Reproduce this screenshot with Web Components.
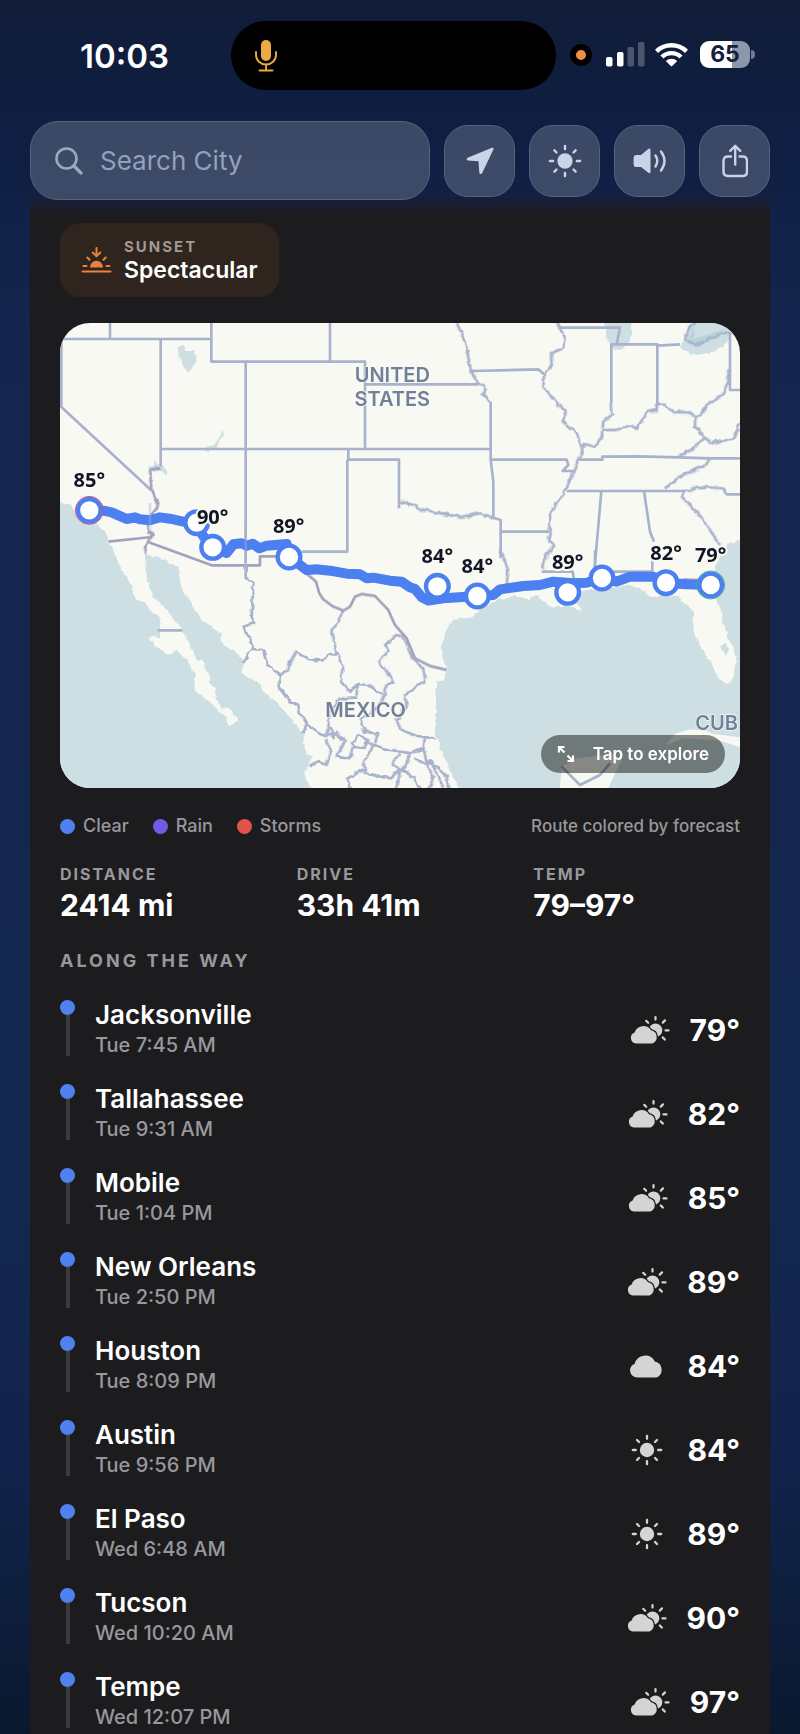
<!DOCTYPE html>
<html lang="en">
<head>
<meta charset="utf-8">
<meta name="viewport" content="width=device-width, initial-scale=1">
<title>Route forecast</title>
<style>
  body {
    margin: 0;
    min-height: 100vh;
    background: linear-gradient(#101c38 0, #0f1e42 130px, #14264e 340px, #14274f 1200px, #11234a 1470px, #0a182f 1734px);
    color: #fff;
    font-family: Inter, "Liberation Sans", sans-serif;
  }
</style>
</head>
<body>
<trip-screen></trip-screen>

<script>
const sunShape = `
  <circle cx="16" cy="16" r="7.2" fill="currentColor"/>
  <path d="M16 1.800v3M16 27.200v3M1.800 16h3M27.200 16h3M6 6l2 2M24 24l2 2M6 26l2-2M24 8l2-2"
    fill="none" stroke="currentColor" stroke-width="2.300" stroke-linecap="round"/>`

const icons = {
  search: `<svg viewBox="0 0 28 28" width="28" height="28"><g fill="none" stroke="currentColor" stroke-width="2.600" stroke-linecap="round"><circle cx="11.500" cy="11.500" r="10"/><path d="M19 19l7 7" stroke-width="3.200"/></g></svg>`,
  location: `<svg viewBox="0 0 28 28" width="28" height="28"><path d="M26 .8L1.600 10.800C.2 11.500.4 13.300 2 13.500L12.500 14.300 13.300 25.500C13.500 27.300 15.300 27.500 16.200 26L27.300 2.800C28 1.300 27.300.3 26 .8Z" fill="currentColor"/></svg>`,
  sun: `<svg viewBox="0 0 32 32" width="34" height="34">${sunShape}</svg>`,
  volume: `<svg viewBox="0 0 34 28" width="34" height="28"><path d="M3 8H8L15 2.200C16.500 1 17.500 1.800 17.500 3V24.500C17.500 26 16.500 26.800 15 25.500L8 20H3Q.6 20 .6 17.500V10.500Q.6 8 3 8Z" fill="currentColor"/><path d="M22.500 8.500Q26 14 22.500 19.500M28 4.500Q35 14 28 23.500" fill="none" stroke="currentColor" stroke-width="2.400" stroke-linecap="round"/></svg>`,
  share: `<svg viewBox="0 0 26 34" width="26" height="34"><path d="M9 12.500H6Q1.500 12.500 1.500 17V27.500Q1.500 32 6 32H20.500Q25 32 25 27.500V17Q25 12.500 20.500 12.500H17.500M13.200 20.500V2M8.200 6.800L13.200 1.800L18.200 6.800" fill="none" stroke="currentColor" stroke-width="2.400" stroke-linecap="round" stroke-linejoin="round"/></svg>`,
  sunset: `<svg viewBox="0 0 31 28" width="31" height="28"><path d="M9 21.500a6.500 6.800 0 0 1 13 0z" fill="currentColor"/><path d="M1.500 25.500H29.500M2.500 20h3M25.500 20h3M6.300 11.500l2.200 2.200M24.700 11.500l-2.200 2.200M15.500 2v8M11.700 6.500l3.800 3.800 3.800-3.800" fill="none" stroke="currentColor" stroke-width="2" stroke-linecap="round" stroke-linejoin="round"/></svg>`,
  mic: `<svg viewBox="0 0 22 32" width="22" height="32"><rect x="6" y="0" width="10" height="21" rx="5" fill="currentColor"/><path d="M1 12v3a10 9.500 0 0 0 20 0v-3M11 25v5M4.500 30.500h13" fill="none" stroke="currentColor" stroke-width="1.900" stroke-linecap="round"/></svg>`,
  wifi: `<svg viewBox="0 0 33 25" width="33" height="25"><g fill="none" stroke="currentColor" stroke-width="4.400"><path d="M1.500 9.300A21.500 21.500 0 0 1 31.500 9.300"/><path d="M7 15A13.500 13.500 0 0 1 26 15"/></g><path d="M10.800 19A8.500 8.500 0 0 1 22.200 19L17.200 24Q16.500 24.700 15.800 24Z" fill="currentColor"/></svg>`,
  signal: `<svg viewBox="0 0 39 25" width="39" height="25"><g fill="currentColor"><rect x="0" y="15" width="6.500" height="9.500" rx="1.800"/><rect x="11" y="10" width="6.500" height="14.500" rx="1.800"/><g opacity=".25"><rect x="21.500" y="5" width="6.500" height="19.500" rx="1.800"/><rect x="32" y="0" width="6.500" height="24.500" rx="1.800"/></g></g></svg>`,
  expand: `<svg viewBox="0 0 18 18" width="18" height="18"><path d="M2 7.500V2H7.500M2 2L7.500 7.500M16 10.500V16H10.500M16 16L10.500 10.500" fill="none" stroke="currentColor" stroke-width="2.200"/></svg>`,
  clear: `<svg viewBox="0 0 32 32" width="32" height="32">${sunShape}</svg>`,
  cloudy: `<svg viewBox="0 0 34 24" width="36" height="25"><path d="M7.500 22.500A6.800 6.800 0 0 1 5.200 9.300 10.400 10.400 0 0 1 24.500 7.200 8 8 0 0 1 26 22.500Z" fill="currentColor"/></svg>`,
  partly: `<svg viewBox="0 0 40 30" width="40" height="30"><g fill="none" stroke="currentColor" stroke-width="2.200" stroke-linecap="round"><path d="M25.500 2v2.600M35 5.400l-2.200 2.200M38.500 15.400h-3M34.800 24.600l-2-2.200M16.200 5.800l2 2"/></g><circle cx="25.500" cy="15.200" r="6.800" fill="currentColor"/><path d="M6 28.500A5.700 5.700 0 0 1 4.600 17.500 9.200 9.200 0 0 1 21 15.200 7 7 0 0 1 22.500 28.500Z" fill="currentColor" stroke="#1c1c1e" stroke-width="2.600" paint-order="stroke"/></svg>`
}

// Attaches an open shadow root holding the given markup
class BaseElement extends HTMLElement {
  render(html) {
    const template = document.createElement('template')
    template.innerHTML = html
    this.attachShadow({mode: 'open'})
    .appendChild(template.content.cloneNode(true))
  }
}

customElements.define('trip-icon',
class TripIcon extends BaseElement {
  connectedCallback() {
    this.render(`
<style>
  :host { display: inline-flex; justify-content: center; align-items: center; }
  svg { display: block; }
</style>
${icons[this.getAttribute('name')]}`)
  }
})

customElements.define('status-bar',
class StatusBar extends BaseElement {
  constructor() {
    super()
    this.render(`
<style>
  :host {
    display: grid;
    grid-template-columns: 1fr 325px 1fr;
    align-items: center;
    padding: 21px 13px 0 0;
  }
  .time {
    padding-left: 18px;
    text-align: center;
    font-size: 33px;
    line-height: 40px;
    font-weight: 600;
  }
  .island {
    display: flex;
    align-items: center;
    height: 69px;
    padding-left: 24px;
    border-radius: 35px;
    background: #000;
    color: #eeaa42;
    box-sizing: border-box;
  }
  .right { display: flex; align-items: center; padding: 0 0 2px 14px; }
  .recording {
    width: 10px;
    height: 10px;
    margin-right: 14px;
    border: 6px solid #000;
    border-radius: 50%;
    background: #ee9045;
  }
  .wifi { margin: 0 12px 0 10px; }
  .battery {
    width: 50px;
    border-radius: 9px;
    background: linear-gradient(90deg, #fff 64%, #8e97aa 64%);
    color: #14203d;
    text-align: center;
    font-size: 23px;
    line-height: 27px;
    font-weight: 700;
  }
  .nub { width: 4px; height: 9px; margin-left: 1px; border-radius: 0 4px 4px 0; background: #6f7a92; }
</style>
<div class="time">10:03</div>
<div class="island"><trip-icon name="mic"></trip-icon></div>
<div class="right">
  <div class="recording"></div>
  <trip-icon name="signal"></trip-icon>
  <trip-icon class="wifi" name="wifi"></trip-icon>
  <div class="battery">65</div>
  <div class="nub"></div>
</div>`)
  }
})

customElements.define('search-field',
class SearchField extends BaseElement {
  constructor() {
    super()
    this.render(`
<style>
  :host { display: block; min-width: 0; }
  label {
    display: flex;
    align-items: center;
    gap: 17px;
    height: 79px;
    padding: 0 24px;
    border: 1px solid #56637c;
    border-radius: 28px;
    background: rgba(104, 116, 137, .5);
    color: #9aa8c3;
    box-sizing: border-box;
  }
  input {
    flex: 1;
    min-width: 0;
    padding: 0;
    border: 0;
    outline: 0;
    background: none;
    color: #fff;
    font: 400 26px/36px Inter, "Liberation Sans", sans-serif;
  }
  input::placeholder { color: #93a1bd; opacity: 1; }
</style>
<label><trip-icon name="search"></trip-icon><input type="text" placeholder="Search City" aria-label="Search City"></label>`)
  }
})

customElements.define('tool-button',
class ToolButton extends BaseElement {
  connectedCallback() {
    this.render(`
<style>
  :host { display: block; }
  button {
    display: flex;
    align-items: center;
    justify-content: center;
    width: 71px;
    height: 72px;
    padding: 0;
    border: 1px solid #56637c;
    border-radius: 24px;
    background: rgba(104, 116, 137, .5);
    color: #c8d4e8;
  }
</style>
<button type="button" aria-label="${this.getAttribute('label')}"><trip-icon name="${this.getAttribute('icon')}"></trip-icon></button>`)
  }
})

customElements.define('sunset-badge',
class SunsetBadge extends BaseElement {
  constructor() {
    super()
    this.render(`
<style>
  :host {
    display: flex;
    align-items: center;
    align-self: flex-start;
    gap: 12px;
    padding: 14px 21px;
    border-radius: 20px;
    background: #30251e;
  }
  trip-icon { color: #e9823d; }
  .label { color: #a09894; font-size: 15px; line-height: 20px; font-weight: 700; letter-spacing: 2px; }
  .value { font-size: 23px; line-height: 26px; font-weight: 600; }
</style>
<trip-icon name="sunset"></trip-icon>
<div>
  <div class="label">SUNSET</div>
  <div class="value"><slot></slot></div>
</div>`)
  }
})

// Map drawing: three units to one pixel at full width
const markers = [[410, 599], [88, 562], [458, 673], [687, 702], [1132, 790], [1252, 819], [1523, 808], [1626, 765], [1818, 779], [1952, 786]]
const labels = [['85°', 88, 493], ['90°', 458, 603], ['89°', 686, 631], ['84°', 1132, 721], ['84°', 1252, 750], ['89°', 1523, 739], ['82°', 1818, 711], ['79°', 1952, 716]]

customElements.define('route-map',
class RouteMap extends BaseElement {
  constructor() {
    super()
    this.render(`
<style>
  :host { display: block; position: relative; border-radius: 30px; overflow: hidden; }
  .map { display: block; width: 100%; background: #f9f9f3; }
  .water { fill: #cddfe2; }
  .land { fill: #f9f9f3; }
  .borders { fill: none; stroke: #a9b2cc; stroke-width: 8; stroke-linejoin: round; }
  .frontier { stroke: #a3a1bc; }
  .lake { fill: #a9cbd2; fill-opacity: .55; }
  .route { fill: none; stroke: #4c7ff0; stroke-width: 30; stroke-linejoin: round; stroke-linecap: round; }
  .marker { fill: #fff; stroke: #4c7ff0; stroke-width: 13; }
  text { text-anchor: middle; paint-order: stroke; stroke: #f9f9f3; stroke-width: 12; stroke-linejoin: round; }
  .temp { fill: #111526; font: 700 60px "Open Sans", "Noto Sans", sans-serif; }
  .country { fill: #717f98; font: 600 60px Inter, sans-serif; stroke-width: 4; }
  button {
    position: absolute;
    right: 15px;
    bottom: 15px;
    display: flex;
    align-items: center;
    gap: 18px;
    height: 38px;
    padding: 0 16px;
    border: 0;
    border-radius: 19px;
    background: rgba(0, 0, 0, .46);
    color: #fff;
    font: 600 17px/24px Inter, "Liberation Sans", sans-serif;
  }
</style>
<svg class="map" viewBox="0 0 2040 1395" role="img" aria-label="Route map">
  <defs>
    <filter id="rough" x="0" y="0" width="2040" height="1395" filterUnits="userSpaceOnUse">
      <feTurbulence type="fractalNoise" baseFrequency=".045" numOctaves="2" seed="4"/>
      <feDisplacementMap in="SourceGraphic" scale="15" xChannelSelector="R" yChannelSelector="G"/>
    </filter>
  </defs>
  <g class="water" filter="url(#rough)">
    <path d="M-20 536H0L30 544 45 566 105 596 135 626 145 656 165 691 175 721 200 761 215 791 220 816 260 846 300 891V943L265 943 290 971 325 996 350 983 385 1016 405 1056 407 1101 460 1146 495 1181 510 1209 532 1189 515 1161 495 1149 485 1159 467 1126 465 1101 445 1056 425 1006 415 1011 385 961 365 916 320 861 275 816 260 761 258 693 310 709 355 731 360 791 400 851 425 891 485 931V961L550 1006 545 1051 605 1086 615 1111 650 1136 700 1196 730 1231 735 1281 755 1301 735 1356 760 1420H-20Z"/>
    <path d="M1210 1420L1200 1395 1170 1346 1145 1281 1128 1241V1121L1132 1076 1152 1071 1160 1041 1145 1001 1142 966 1160 921 1185 886H1230L1260 861 1310 831 1360 819 1405 829 1430 816 1475 853 1520 851 1568 861 1540 831 1565 801 1640 799 1700 786 1740 793 1770 823 1810 816 1850 819 1902 866 1900 931 1940 1001 1960 1026 1975 1066 1995 1083 2018 1076 2028 1011 2020 971 1995 921 1985 871 1965 816 1960 771 1970 721 2005 661 2070 640V1420Z"/>
    <path d="M350 73L370 69 380 84 402 84 410 116 385 146 370 131ZM1635 -10H1720L1710 51 1685 81 1650 76 1638 36ZM1860 71L1880 36 1905 -10H1980L2020 16 2010 51 1960 86 1910 96 1870 84ZM1980 970L1995 960 2004 975 1996 1002Z"/>
  </g>
  <g class="land" transform="translate(1020 681)">
    <path d="M480 714L485 650 530 625 640 612 665 630 640 680 625 714ZM798 584L825 552 870 538 920 542 940 552 1020 562V592L960 572 900 568 850 565 812 580Z"/>
  </g>
  <g class="lake">
    <path d="M489 320L492 336 478 352 470 378 450 374 446 388 428 380 440 372 462 366 478 344ZM284 408L292 424 310 430 322 446 320 458 304 444 280 446 264 440 268 430 282 430Z"/>
    <path d="M1900 10L1905 40 1890 50 1960 30 2000 15 1960 50 1910 70 1885 55Z"/>
  </g>

  <g class="borders">
    <path transform="translate(-30 -24)" d="M30 72H484M180 24V72M34 72V276L302 524M332 72V455M484 24V140H945V402M840 24V140M587 140V745M332 402H1320M895 402V434H1047V580M892 434V710H755M945 208H1285"/>
    <g class="frontier"><path d="M145 656L276 642M262 656L455 727H600V700H680"/></g>
    <path transform="translate(1020 -24)" d="M272 262V434L280 500V608L302 615V730M215 168L415 163 432 178M478 38H660L650 88M632 88H772V270M634 88V265M772 92L840 88M990 50V225H1020M272 434H500L505 450 488 468H520M535 434H607V425L720 424 835 427 930 430H1025M500 528H855M604 528L583 770M732 528L750 650 762 680M302 650H447M978 538H1025"/>
    <path transform="translate(1020 681)" d="M425 65H518L522 90M585 0V68M640 65H757V-10M850 88L900 90M485 650L540 705 600 675 630 640"/>
    <path d="M293 922H367"/>
  </g>
  <g class="borders" filter="url(#rough)">
    <path class="frontier" d="M302 436L270 440 274 500 297 548 265 585 265 626 280 636 255 665 258 693"/>
    <path transform="translate(1020 -24)" d="M168 20L185 55 200 100 212 165 235 205 258 220 248 238 272 262M0 560L40 570 70 585 100 590 145 600 185 605 240 595 280 608M470 20L478 38 497 70 490 100 452 115 455 150 432 180 430 215 470 265 498 285 488 320 530 355 545 400 548 410 535 435 520 470 500 520 480 550 450 600 448 680 460 690 440 720 425 765M632 265L634 300 610 320 607 345M545 400L555 388 585 395 605 365 607 345 650 345 690 332 710 340 740 292 770 285 772 265 800 275 820 292 870 292 885 310 905 300 920 270 965 240 985 200V165M858 75L885 92 940 65 990 50M855 75L860 50 885 20M835 427L880 400 915 368 885 335V310M915 368L935 385 1000 370 1025 315M855 528L895 515 970 520 978 538M795 525L810 505 860 475 920 450 930 430M855 528L845 545 880 580 920 630 960 690M300 700L325 765 318 830"/>
    <path d="M557 727V761L580 776 575 881 582 901 550 911 578 971 550 1021M578 978L610 981 622 1026 660 1056 655 1091 685 1131 715 1146 720 1171 740 1201 730 1231M740 1201L770 1226 798 1241"/>
    <path transform="translate(690 651)" d="M158 214L127 275 140 345M-30 405L-5 390 0 365 20 338 55 357 95 362 120 342 145 345 158 375 152 425 180 455 205 432 235 435 265 455 285 465 290 430 310 425 268 365 298 330 285 315 318 285 340 290 365 350 400 385 405 420 345 465 350 500 320 540 335 570 380 588 435 595M200 435V472L150 475 125 510 108 590M285 465L265 500 210 540 225 575 262 580 255 610M60 680L85 663 110 675 120 635 108 600M108 590L130 575 165 600 140 650 175 655 190 625M122 560L130 595 142 575 150 600 165 590M185 610L205 585 235 600 225 620 195 625ZM235 610L300 630 365 640 400 625 405 590M250 615L222 665 225 700 300 715 330 690 305 670 330 640M222 690L172 715 185 755M330 690L320 755M365 640L335 690 370 710 395 755M400 625L410 665 445 680 470 710 475 755M405 670L430 710 415 755M375 655L400 670 420 660 440 700 460 740"/>
  </g>
  <path class="borders frontier" transform="translate(690 651)" d="M25 80L78 125 88 160 100 178 130 200 160 212 180 200 195 170 215 162 255 168 295 210 315 255 350 295 375 355 420 378 470 390"/>

  <path class="route" d="M88 562L130 563 155 568 175 577 200 588 225 583 240 589 270 592 300 583 335 588 370 596 410 604 430 640 458 673 500 690 520 664 545 661 560 668 578 662 598 676 620 668 680 663 687 702 720 726 740 741 770 739 810 743 860 752 900 754 920 766 940 764 990 773 1025 776 1050 793 1065 798 1085 822 1105 833 1150 826 1255 819 1300 816 1320 799 1390 789 1440 786 1480 776 1540 781 1580 779 1626 765 1670 776 1710 761 1780 761 1818 779 1880 784 1952 786"/>
  <path class="borders" opacity=".4" d="M557 600V745M270 540V660"/>
  <g class="markers">${markers.map(([x, y]) => `<circle class="marker" cx="${x}" cy="${y}" r="34"/>`).join('')}</g>
  <circle cx="88" cy="562" r="42" fill="none" stroke="#c9557a" stroke-width="3"/>
  <circle cx="1952" cy="786" r="42" fill="none" stroke="#45a99d" stroke-width="3"/>
  ${labels.map(([label, x, y]) => `<text class="temp" x="${x}" y="${y}">${label}</text>`).join('')}
  <text class="country" x="997" y="178">UNITED</text>
  <text class="country" x="997" y="250">STATES</text>
  <text class="country" x="917" y="1183">MEXICO</text>
  <text class="country" x="1970" y="1222">CUB</text>
</svg>
<button type="button"><trip-icon name="expand"></trip-icon>Tap to explore</button>`)
  }
})

customElements.define('map-legend',
class MapLegend extends BaseElement {
  constructor() {
    super()
    this.render(`
<style>
  :host { display: flex; align-items: center; gap: 24px; color: #98989c; font-size: 18px; line-height: 24px; font-weight: 500; }
  span { display: flex; align-items: center; gap: 8px; }
  span::before { content: ""; width: 15px; height: 15px; border-radius: 50%; background: var(--dot); }
  .clear { --dot: #4f82f0; }
  .rain { --dot: #6f5ce6; }
  .storms { --dot: #de544b; }
  .note { margin-left: auto; font-size: 17px; }
</style>
<span class="clear">Clear</span>
<span class="rain">Rain</span>
<span class="storms">Storms</span>
<div class="note">Route colored by forecast</div>`)
  }
})

customElements.define('trip-stat',
class TripStat extends BaseElement {
  connectedCallback() {
    this.render(`
<style>
  :host { display: block; }
  .label { color: #98989c; font-size: 16px; line-height: 20px; font-weight: 700; letter-spacing: 2px; }
  .value { margin-top: 4px; font-size: 30px; line-height: 34px; font-weight: 700; }
</style>
<div class="label">${this.getAttribute('label')}</div>
<div class="value"><slot></slot></div>`)
  }
})

customElements.define('route-stop',
class RouteStop extends BaseElement {
  connectedCallback() {
    this.render(`
<style>
  :host { display: flex; align-items: center; }
  .track { display: flex; flex-direction: column; align-items: center; align-self: stretch; width: 15px; margin-right: 20px; padding-bottom: 4px; }
  .dot { width: 15px; height: 15px; border-radius: 50%; background: #4f82f0; }
  .line { flex: 1; width: 4px; background: #3a3a3c; }
  .place { flex: 1; }
  .name { font-size: 26px; line-height: 30px; font-weight: 600; }
  .time { color: #98989c; font-size: 20px; line-height: 30px; font-weight: 500; }
  trip-icon { width: 40px; margin-right: 20px; color: #d4d4d4; }
  .temp { font-size: 30px; line-height: 34px; font-weight: 700; }
</style>
<div class="track"><div class="dot"></div><div class="line"></div></div>
<div class="place">
  <div class="name"><slot></slot></div>
  <div class="time">${this.getAttribute('time')}</div>
</div>
<trip-icon name="${this.getAttribute('sky')}"></trip-icon>
<div class="temp">${this.getAttribute('temp')}</div>`)
  }
})

customElements.define('trip-screen',
class TripScreen extends BaseElement {
  constructor() {
    super()
    this.render(`
<style>
  :host { display: flex; flex-direction: column; min-height: 100vh; }
  header { position: relative; z-index: 1; display: flex; align-items: center; gap: 14px; margin-top: 31px; padding: 0 30px; }
  search-field { flex: 1; }
  main {
    flex: 1;
    display: flex;
    flex-direction: column;
    gap: 26px;
    margin: -8px 30px 0;
    padding: 31px 30px 3px;
    background: linear-gradient(rgba(28, 28, 30, 0), #1c1c1e 22px);
  }
  .stats { display: grid; grid-template-columns: repeat(3, 1fr); gap: 30px; }
  h2 { margin: 0; color: #98989c; font-size: 18px; line-height: 26px; font-weight: 700; letter-spacing: 3px; }
  .stops { display: flex; flex-direction: column; gap: 24px; }
</style>
<status-bar></status-bar>
<header>
  <search-field></search-field>
  <tool-button icon="location" label="Current location"></tool-button>
  <tool-button icon="sun" label="Appearance"></tool-button>
  <tool-button icon="volume" label="Sound"></tool-button>
  <tool-button icon="share" label="Share"></tool-button>
</header>
<main>
  <sunset-badge>Spectacular</sunset-badge>
  <route-map></route-map>
  <map-legend></map-legend>
  <div class="stats">
    <trip-stat label="DISTANCE">2414 mi</trip-stat>
    <trip-stat label="DRIVE">33h 41m</trip-stat>
    <trip-stat label="TEMP">79–97°</trip-stat>
  </div>
  <h2>ALONG THE WAY</h2>
  <div class="stops">
    <route-stop time="Tue 7:45 AM" sky="partly" temp="79°">Jacksonville</route-stop>
    <route-stop time="Tue 9:31 AM" sky="partly" temp="82°">Tallahassee</route-stop>
    <route-stop time="Tue 1:04 PM" sky="partly" temp="85°">Mobile</route-stop>
    <route-stop time="Tue 2:50 PM" sky="partly" temp="89°">New Orleans</route-stop>
    <route-stop time="Tue 8:09 PM" sky="cloudy" temp="84°">Houston</route-stop>
    <route-stop time="Tue 9:56 PM" sky="clear" temp="84°">Austin</route-stop>
    <route-stop time="Wed 6:48 AM" sky="clear" temp="89°">El Paso</route-stop>
    <route-stop time="Wed 10:20 AM" sky="partly" temp="90°">Tucson</route-stop>
    <route-stop time="Wed 12:07 PM" sky="partly" temp="97°">Tempe</route-stop>
  </div>
</main>`)
  }
})
</script>
</body>
</html>
